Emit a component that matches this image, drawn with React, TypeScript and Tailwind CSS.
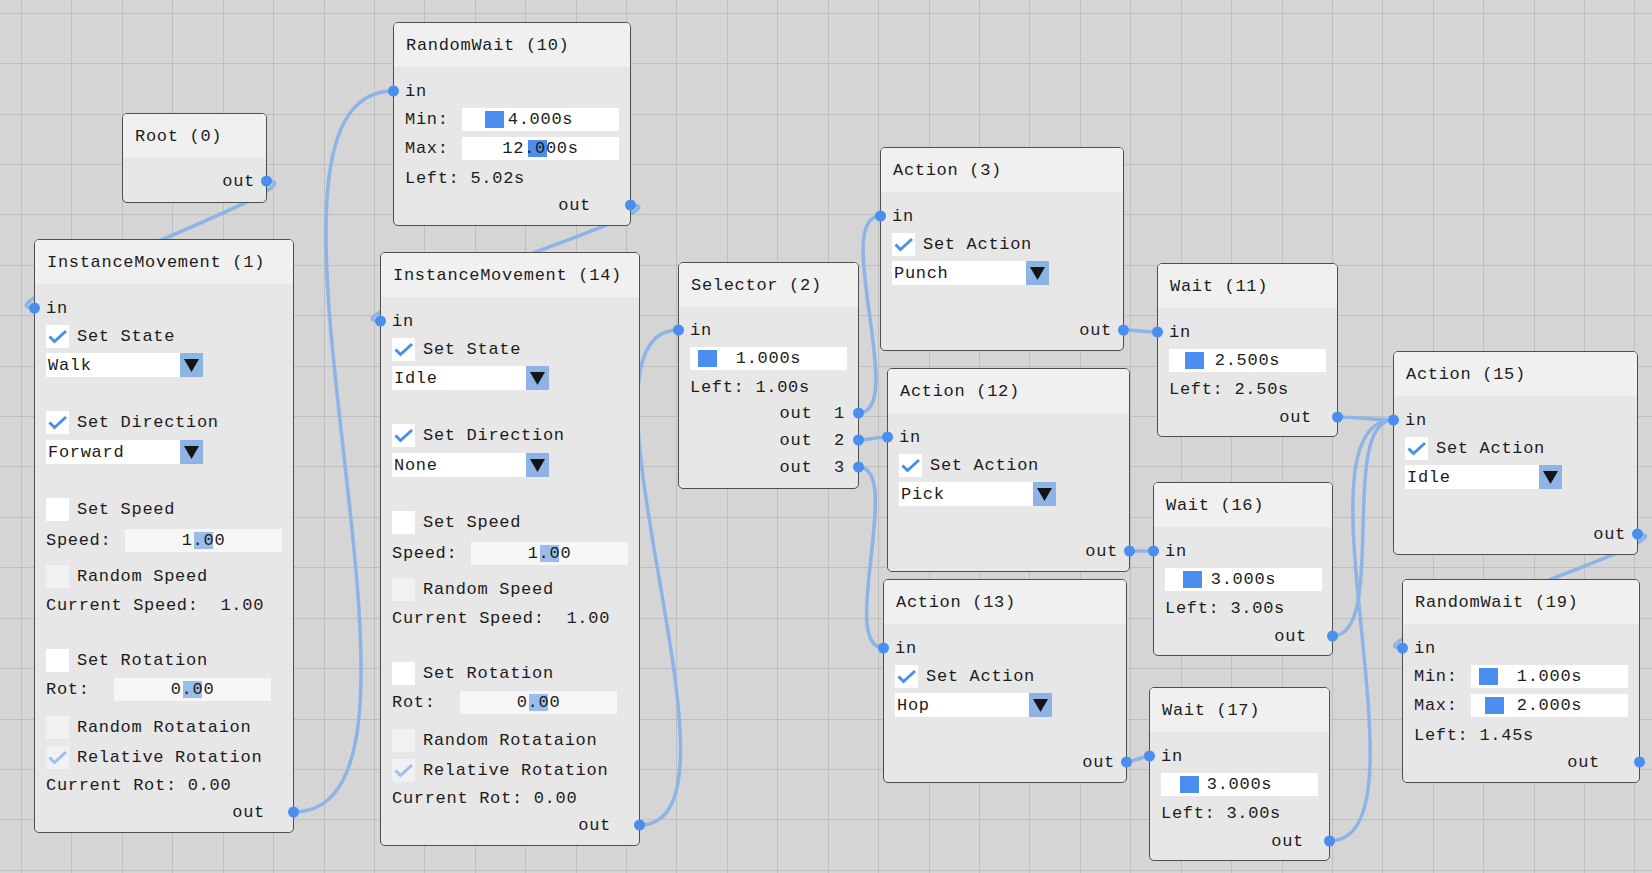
import clsx from 'clsx';
import type { ReactNode } from 'react';

type Pt = { x: number; y: number };

const GRID = 50.42;
const WIRE = '#8cb4e6';
const PIN = '#4a8ff0';

const nodes = {
  root: { x: 122, y: 113, w: 145 },
  im1: { x: 34, y: 239, w: 260 },
  rw10: { x: 393, y: 22, w: 238 },
  im14: { x: 380, y: 252, w: 260 },
  sel2: { x: 678, y: 262, w: 181 },
  a3: { x: 880, y: 147, w: 244 },
  a12: { x: 887, y: 368, w: 243 },
  a13: { x: 883, y: 579, w: 244 },
  w11: { x: 1157, y: 263, w: 181 },
  w16: { x: 1153, y: 482, w: 180 },
  w17: { x: 1149, y: 687, w: 181 },
  a15: { x: 1393, y: 351, w: 245 },
  rw19: { x: 1402, y: 579, w: 238 }
};
type NodePos = { x: number; y: number; w: number };

const pinIn = (n: NodePos, dy = 69): Pt => ({ x: n.x + 0.5, y: n.y + dy });
const pinOut = (n: NodePos, dy: number): Pt => ({ x: n.x + n.w - 0.5, y: n.y + dy });

const pins = {
  rootOut: pinOut(nodes.root, 68),
  im1In: pinIn(nodes.im1),
  im1Out: pinOut(nodes.im1, 573),
  rw10In: pinIn(nodes.rw10),
  rw10Out: pinOut(nodes.rw10, 183),
  im14In: pinIn(nodes.im14),
  im14Out: pinOut(nodes.im14, 573),
  selIn: pinIn(nodes.sel2, 68),
  selOut1: pinOut(nodes.sel2, 151),
  selOut2: pinOut(nodes.sel2, 178),
  selOut3: pinOut(nodes.sel2, 205),
  a3In: pinIn(nodes.a3),
  a3Out: pinOut(nodes.a3, 183),
  a12In: pinIn(nodes.a12),
  a12Out: pinOut(nodes.a12, 183),
  a13In: pinIn(nodes.a13),
  a13Out: pinOut(nodes.a13, 183),
  w11In: pinIn(nodes.w11),
  w11Out: pinOut(nodes.w11, 154),
  w16In: pinIn(nodes.w16),
  w16Out: pinOut(nodes.w16, 154),
  w17In: pinIn(nodes.w17),
  w17Out: pinOut(nodes.w17, 154),
  a15In: pinIn(nodes.a15),
  a15Out: pinOut(nodes.a15, 183),
  rw19In: pinIn(nodes.rw19),
  rw19Out: pinOut(nodes.rw19, 183)
};

const links: [Pt, Pt][] = [
  [pins.rootOut, pins.im1In],
  [pins.im1Out, pins.rw10In],
  [pins.rw10Out, pins.im14In],
  [pins.im14Out, pins.selIn],
  [pins.selOut1, pins.a3In],
  [pins.selOut2, pins.a12In],
  [pins.selOut3, pins.a13In],
  [pins.a3Out, pins.w11In],
  [pins.a12Out, pins.w16In],
  [pins.a13Out, pins.w17In],
  [pins.w11Out, pins.a15In],
  [pins.w16Out, pins.a15In],
  [pins.w17Out, pins.a15In],
  [pins.a15Out, pins.rw19In]
];

// same bezier as imnodes: horizontal handles, a quarter of the link length
const wirePath = (a: Pt, b: Pt) => {
  const k = 0.25 * Math.hypot(b.x - a.x, b.y - a.y);
  return `M${a.x} ${a.y} C${a.x + k} ${a.y} ${b.x - k} ${b.y} ${b.x} ${b.y}`;
};

const Node = ({ pos, title, children, className }: { pos: NodePos; title: string; children: ReactNode; className?: string }) => (
  <div
    className="absolute rounded-[5px] border border-[#4e4e4e] bg-[#e7e7e7] overflow-hidden"
    style={{ left: pos.x, top: pos.y, width: pos.w }}>
    <div className="h-[44px] bg-[#f0f0f0] flex items-center pl-[12px] whitespace-pre">{title}</div>
    <div className={clsx('flex flex-col pl-[11px]', className)}>{children}</div>
  </div>
);

const Check = ({ on, dim }: { on?: boolean; dim?: boolean }) => (
  <div className={clsx('w-[23px] h-[23px] shrink-0', dim ? 'bg-[#f1f1f1]' : 'bg-white')}>
    {on && (
      <svg viewBox="0 0 23 23" className="w-full h-full">
        <polyline points="3.5,11.5 8.5,16.5 20,6" fill="none" stroke={dim ? '#9cc0ee' : PIN} strokeWidth={3} />
      </svg>
    )}
  </div>
);

const CheckRow = ({ label, on, dim, className }: { label: string; on?: boolean; dim?: boolean; className?: string }) => (
  <div className={clsx('h-6 flex items-center', className)}>
    <Check on={on} dim={dim} />
    <span className="ml-[8px] whitespace-pre">{label}</span>
  </div>
);

const Combo = ({ value, className }: { value: string; className?: string }) => (
  <div className={clsx('flex h-6 w-[157px]', className)}>
    <div className="flex-1 bg-white pl-[2px] flex items-center">{value}</div>
    <div className="w-[23px] bg-[#8db4e4] flex items-center justify-center">
      <svg width="15" height="13" viewBox="0 0 15 13">
        <polygon points="0,0 15,0 7.5,13" fill="#151515" />
      </svg>
    </div>
  </div>
);

const Slider = ({ grab, text, dim }: { grab: number; text: string; dim?: boolean }) => (
  <div className={clsx('relative h-[23px] w-[157px] flex items-center justify-center', dim ? 'bg-[#f6f6f6]' : 'bg-white')}>
    <div className={clsx('absolute top-[3px] h-[17px] w-[19px]', dim ? 'bg-[#98bdec]' : 'bg-[#4a8ff0]')} style={{ left: grab }} />
    <span className="relative">{text}</span>
  </div>
);

const Text = ({ children, className }: { children: ReactNode; className?: string }) => (
  <div className={clsx('h-6 flex items-center whitespace-pre', className)}>{children}</div>
);

const InstanceMovement = ({ pos, title, state, dir }: { pos: NodePos; title: string; state: string; dir: string }) => (
  <Node pos={pos} title={title} className="pb-[8px]">
    <Text className="mt-[12px]">in</Text>
    <CheckRow className="mt-[4px]" on label="Set State" />
    <Combo className="mt-[5px]" value={state} />
    <CheckRow className="mt-[33px]" on label="Set Direction" />
    <Combo className="mt-[6px]" value={dir} />
    <CheckRow className="mt-[33px]" label="Set Speed" />
    <Text className="mt-[7px]">
      <span className="w-[79px]">Speed:</span>
      <Slider dim grab={69} text="1.00" />
    </Text>
    <CheckRow className="mt-[12px]" dim label="Random Speed" />
    <Text className="mt-[5px]">Current Speed:  1.00</Text>
    <CheckRow className="mt-[31px]" label="Set Rotation" />
    <Text className="mt-[5px]">
      <span className="w-[68px]">Rot:</span>
      <Slider dim grab={69} text="0.00" />
    </Text>
    <CheckRow className="mt-[14px]" dim label="Random Rotataion" />
    <CheckRow className="mt-[6px]" dim on label="Relative Rotation" />
    <Text className="mt-[4px]">Current Rot: 0.00</Text>
    <Text className="mt-[3px] justify-end pr-[28px]">out</Text>
  </Node>
);

const Action = ({ pos, title, value }: { pos: NodePos; title: string; value: string }) => (
  <Node pos={pos} title={title} className="pb-[8px]">
    <Text className="mt-[12px]">in</Text>
    <CheckRow className="mt-[4px]" on label="Set Action" />
    <Combo className="mt-[5px]" value={value} />
    <Text className="mt-[33px] justify-end pr-[11px]">out</Text>
  </Node>
);

const Wait = ({ pos, title, grab, value, left }: { pos: NodePos; title: string; grab: number; value: string; left: string }) => (
  <Node pos={pos} title={title} className="pb-[7px]">
    <Text className="mt-[12px]">in</Text>
    <div className="mt-[4px] h-6 flex items-center">
      <Slider grab={grab} text={value} />
    </div>
    <Text className="mt-[5px]">Left: {left}</Text>
    <Text className="mt-[4px] justify-end pr-[25px]">out</Text>
  </Node>
);

const RandomWait = ({ pos, title, min, max, left }: { pos: NodePos; title: string; min: [number, string]; max: [number, string]; left: string }) => (
  <Node pos={pos} title={title} className="pb-[8px]">
    <Text className="mt-[12px]">in</Text>
    <Text className="mt-[4px]">
      <span className="w-[57px]">Min:</span>
      <Slider grab={min[0]} text={min[1]} />
    </Text>
    <Text className="mt-[5px]">
      <span className="w-[57px]">Max:</span>
      <Slider grab={max[0]} text={max[1]} />
    </Text>
    <Text className="mt-[6px]">Left: {left}</Text>
    <Text className="mt-[3px] justify-end pr-[39px]">out</Text>
  </Node>
);

const App = () => {
  const vLines = Array.from({ length: 33 }, (_, i) => Math.round(21 + GRID * i));
  const hLines = Array.from({ length: 18 }, (_, i) => Math.round(12.7 + GRID * i));

  return (
    <div className="relative w-[1652px] h-[873px] overflow-hidden bg-[#d5d5d5] font-['Liberation_Mono','DejaVu_Sans_Mono',monospace] text-[17px] tracking-[0.7px] text-[#1c1c1c] leading-none">
      {/* grid + links, under the nodes */}
      <svg className="absolute inset-0" width={1652} height={873}>
        {vLines.map((x) => (
          <rect key={'v' + x} x={x} y={0} width={1} height={873} fill="#bfbfbf" />
        ))}
        {hLines.map((y) => (
          <rect key={'h' + y} x={0} y={y} width={1652} height={1} fill="#bfbfbf" />
        ))}
        {links.map(([a, b], i) => (
          <path key={i} d={wirePath(a, b)} fill="none" stroke={WIRE} strokeWidth={3.5} />
        ))}
      </svg>

      <Node pos={nodes.root} title="Root (0)" className="pb-[9px]">
        <Text className="mt-[11px] justify-end pr-[11px]">out</Text>
      </Node>

      <InstanceMovement pos={nodes.im1} title="InstanceMovement (1)" state="Walk" dir="Forward" />
      <InstanceMovement pos={nodes.im14} title="InstanceMovement (14)" state="Idle" dir="None" />

      <RandomWait pos={nodes.rw10} title="RandomWait (10)" min={[23, '4.000s']} max={[66, '12.000s']} left="5.02s" />
      <RandomWait pos={nodes.rw19} title="RandomWait (19)" min={[8, '1.000s']} max={[14, '2.000s']} left="1.45s" />

      <Node pos={nodes.sel2} title="Selector (2)" className="pb-[9px]">
        <Text className="mt-[11px]">in</Text>
        <div className="mt-[4px] h-6 flex items-center">
          <Slider grab={8} text="1.000s" />
        </div>
        <Text className="mt-[5px]">Left: 1.00s</Text>
        <Text className="mt-[2px] justify-end pr-[13px]">out  1</Text>
        <Text className="mt-[3px] justify-end pr-[13px]">out  2</Text>
        <Text className="mt-[3px] justify-end pr-[13px]">out  3</Text>
      </Node>

      <Action pos={nodes.a3} title="Action (3)" value="Punch" />
      <Action pos={nodes.a12} title="Action (12)" value="Pick" />
      <Action pos={nodes.a13} title="Action (13)" value="Hop" />
      <Action pos={nodes.a15} title="Action (15)" value="Idle" />

      <Wait pos={nodes.w11} title="Wait (11)" grab={16} value="2.500s" left="2.50s" />
      <Wait pos={nodes.w16} title="Wait (16)" grab={18} value="3.000s" left="3.00s" />
      <Wait pos={nodes.w17} title="Wait (17)" grab={19} value="3.000s" left="3.00s" />

      {/* pin dots sit on top of the node borders */}
      <svg className="absolute inset-0 pointer-events-none" width={1652} height={873}>
        {Object.values(pins).map((p, i) => (
          <circle key={i} cx={p.x} cy={p.y} r={5.5} fill={PIN} />
        ))}
      </svg>
    </div>
  );
};

export default App;
